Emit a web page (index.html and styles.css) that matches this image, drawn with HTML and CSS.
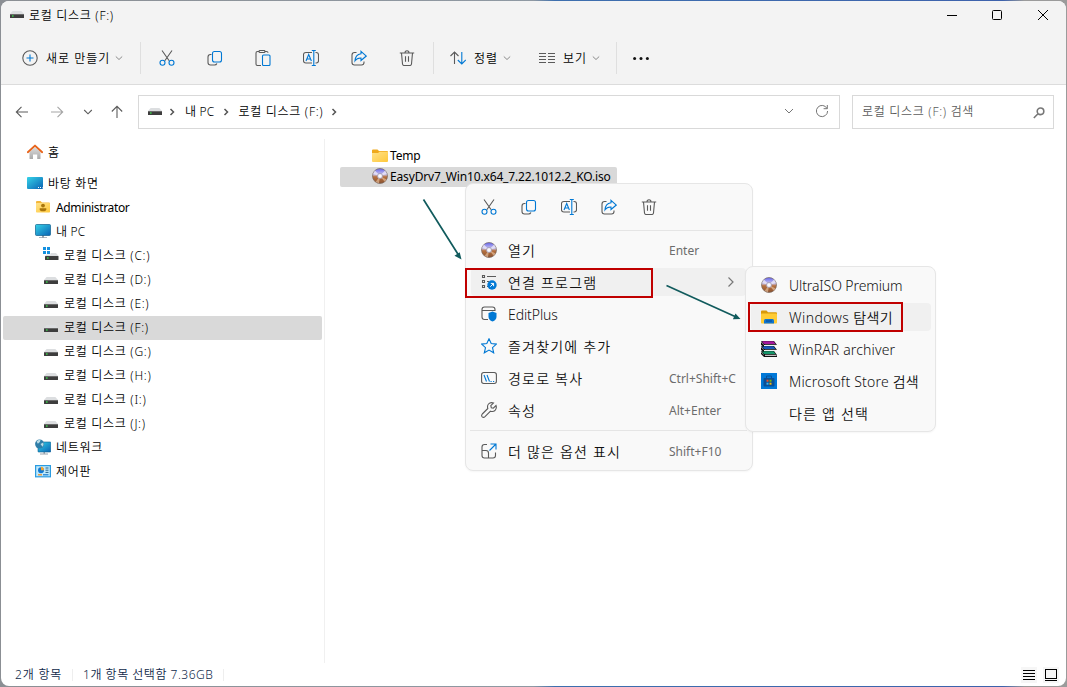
FILE: index.html
```html
<!DOCTYPE html>
<html lang="ko">
<head>
  <meta charset="UTF-8" />
  <meta name="viewport" content="width=device-width, initial-scale=1.0"/>
  <title>로컬 디스크 (F:)</title>
  <link rel="stylesheet" href="styles.css">
</head>
<body>

<!-- Shared icons -->
<svg class="defs" width="0" height="0">
  <defs>
    <linearGradient id="blueScreen" x1="0" y1="0" x2="1" y2="1"><stop offset="0" stop-color="#35d3e8"/><stop offset="1" stop-color="#0a62b4"/></linearGradient>
    <linearGradient id="folderFill" x1="0" y1="0" x2="1" y2="1"><stop offset="0" stop-color="#ffe28a"/><stop offset="1" stop-color="#ffc83a"/></linearGradient>
    <linearGradient id="discFill" x1="0" y1="0" x2="0" y2="1"><stop offset="0" stop-color="#6464ee"/><stop offset=".4" stop-color="#c9c4ea"/><stop offset=".55" stop-color="#b8723f"/><stop offset="1" stop-color="#8a5230"/></linearGradient>
    <linearGradient id="wallFill" x1="0" y1="0" x2="0" y2="1"><stop offset="0" stop-color="#ddd"/><stop offset="1" stop-color="#a9a9a9"/></linearGradient>
  </defs>
  <symbol id="drive" viewBox="0 0 16 16">
    <path d="M3.6 6h8.8l2.6 3H1z" fill="#dcdee0"/>
    <rect x="1" y="9" width="14" height="4" rx=".5" fill="#3d3d3d"/>
    <rect x="1" y="9" width="14" height="1" fill="#6a6a6a"/>
    <rect x="3" y="10.4" width="1.6" height="1.2" fill="#3bea4d"/>
  </symbol>
  <symbol id="system-drive" viewBox="0 0 16 16">
    <path d="M5 6h8l2.6 3H2z" fill="#dcdee0"/>
    <rect x="2" y="9" width="13.5" height="4" rx=".5" fill="#3d3d3d"/>
    <rect x="4" y="10.4" width="1.6" height="1.2" fill="#3bea4d"/>
    <path d="M0 0h7.500v7.500H0z" fill="#fff"/>
    <path d="M0 0h3v3H0zM4 0h3v3H4zM0 4h3v3H0zM4 4h3v3H4z" fill="#1590e0"/>
  </symbol>
  <symbol id="home" viewBox="0 0 16 16">
    <path d="M2.500 8L8 3l5.500 5v6.500q0 .5-.5.5h-2.800v-4.500H6V15H3q-.5 0-.5-.5z" fill="url(#wallFill)"/>
    <path d="M.8 8.200L8 1.600l7.200 6.600" fill="none" stroke="#e8651c" stroke-width="1.900" stroke-linecap="round" stroke-linejoin="round"/>
  </symbol>
  <symbol id="desktop" viewBox="0 0 16 16">
    <rect x="0" y="2" width="16" height="12" rx="1" fill="url(#blueScreen)"/>
    <path d="M11 12.500h1M13 12.500h1M15 12.500h.5" stroke="#fff"/>
  </symbol>
  <symbol id="user-folder" viewBox="0 0 16 16">
    <path d="M1 3q0-1 1-1h3.500l1.500 1.500h7q1 0 1 1V13H1z" fill="#f4b73b"/>
    <rect x="1" y="4" width="14" height="9.500" rx=".8" fill="url(#folderFill)"/>
    <circle cx="8" cy="6.600" r="1.900" fill="#a9750c"/>
    <path d="M4.700 9.200h6.600v1q0 2-3.300 2t-3.300-2z" fill="#a9750c"/>
  </symbol>
  <symbol id="pc" viewBox="0 0 16 16">
    <path d="M7 12h2v2.200h3V15H4v-.8h3z" fill="#9aa4ae"/>
    <rect x=".5" y="1.500" width="15" height="11" rx="1" fill="url(#blueScreen)" stroke="#0f5f8e" stroke-width=".7"/>
  </symbol>
  <symbol id="network" viewBox="0 0 16 16">
    <path d="M8.500 12h1.500v2.600h3V15.500H5v-.9h3.500z" fill="#9aa4ae"/>
    <rect x="3" y="3" width="12.800" height="10" rx=".6" fill="url(#blueScreen)" stroke="#0f5f8e" stroke-width=".6"/>
    <circle cx="4.600" cy="5" r="4.500" fill="#2f7da8"/>
    <path d="M1.500 2.600q2-2.300 4-1.700l-.6 2.200-2 1.600zM5.500 5l2.800-1.500q.8 2-.8 4.300z" fill="#b9dbe6"/>
  </symbol>
  <symbol id="control-panel" viewBox="0 0 16 16">
    <rect x=".6" y="2.600" width="14.800" height="11.200" fill="#bfe9fb" stroke="#2b9be0" stroke-width="1.200"/>
    <circle cx="6" cy="7.200" r="3" fill="#1479d1"/>
    <path d="M6 7.200V3.800a3.400 3.400 0 0 1 3 3.400z" fill="#f7a32b"/>
    <path d="M10.500 5h3M10.500 7.200h3M10.500 9.400h3" stroke="#23638f"/>
    <path d="M3 11.800h4" stroke="#f08a1a" stroke-width="1.200"/>
    <path d="M8 11.800h5.500" stroke="#1479d1" stroke-width="1.200"/>
  </symbol>
  <symbol id="folder" viewBox="0 0 16 16">
    <path d="M0 2.500Q0 1.500 1 1.500h4.500L7 3h8q1 0 1 1v6H0z" fill="#efa91c"/>
    <path d="M0 5h6l1.500-1.200H16V13q0 1-1 1H1q-1 0-1-1z" fill="url(#folderFill)"/>
  </symbol>
  <symbol id="disc" viewBox="0 0 16 16">
    <circle cx="8" cy="8" r="7.500" fill="url(#discFill)" stroke="#75655f" stroke-width=".7"/>
    <path d="M8 8L1 5.500 3 2.500zM8 8l7-2.500-2-3z" fill="#f3eff8" opacity=".7"/>
    <path d="M8 8L3.500 14 7 15.300zM8 8l6.500 3.500-1.800 2.200z" fill="#efc9a8" opacity=".6"/>
    <circle cx="8" cy="8" r="2.600" fill="#eceaf2" stroke="#8e86a0" stroke-width=".6"/>
    <circle cx="8" cy="8" r="1.100" fill="#fff"/>
  </symbol>
  <symbol id="cut" viewBox="0 0 16 16">
    <path d="M3 .5l7.200 10.300M13 .5L5.800 10.800" class="ink"/>
    <circle cx="3.500" cy="12.700" r="2.500" class="accent"/>
    <circle cx="12.500" cy="12.700" r="2.500" class="accent"/>
  </symbol>
  <symbol id="copy" viewBox="0 0 16 16">
    <path d="M4.500 4.500H3.500q-2.500 0-2.500 2.500v5.500q0 2.500 2.500 2.500h4q1.800 0 2.400-1.500" class="ink"/>
    <rect x="5.500" y="1.500" width="9" height="10.500" rx="2" class="accent"/>
  </symbol>
  <symbol id="paste" viewBox="0 0 16 16">
    <path d="M6 15.500H2.500q-1.500 0-1.500-1.500V3q0-1.500 1.500-1.500h1.500M10 1.500h1.500q1.500 0 1.500 1.300" class="ink"/>
    <rect x="4" y=".5" width="6" height="2" rx="1" class="ink"/>
    <rect x="7.500" y="5" width="7.500" height="10.500" rx="1" class="accent"/>
  </symbol>
  <symbol id="rename" viewBox="0 0 16 16">
    <path d="M9 2.500H2.800Q.5 2.500.5 4.800v5.900Q.5 13 2.800 13H9M12.500 2.500h.7q2.300 0 2.300 2.300v5.900q0 2.300-2.300 2.300h-.7" class="ink"/>
    <path d="M3 11l2.700-6.500L8.400 11M4 9h3.500M10.800.5v15M8.800.5h4M8.800 15.500h4" class="accent"/>
  </symbol>
  <symbol id="share" viewBox="0 0 16 16">
    <path d="M5.500 2.500H3.500Q1 2.500 1 5v7.500Q1 15 3.500 15h7q2.500 0 2.500-2.500v-1" class="ink"/>
    <path d="M10 1.300L15.300 6 10 10.500V8Q6 7.800 4 10.800 4.400 4.500 10 3.800z" class="accent"/>
  </symbol>
  <symbol id="trash" viewBox="0 0 16 16">
    <path d="M.8 3h14.400M2.500 3l1 11q.2 1.500 1.600 1.500h5.800q1.400 0 1.600-1.500l1-11M6 3q0-2.300 2-2.300T10 3M6.500 6.300v5.500M9.500 6.300v5.500" class="ink"/>
  </symbol>
  <symbol id="chevron-down" viewBox="0 0 8 8"><path d="M.8 2.500L4 5.500l3.200-3"/></symbol>
  <symbol id="chevron-right" viewBox="0 0 8 8"><path d="M2.500 1L5.500 4l-3 3"/></symbol>
</svg>

<div class="window">

  <div class="title-bar">
    <svg class="title-icon" width="16" height="16"><use href="#drive"/></svg>
    <span class="title-text">로컬 디스크 (F:)</span>
    <svg class="caption" width="10" height="10" viewBox="0 0 10 10"><path d="M0 5.500h10"/></svg>
    <svg class="caption maximize" width="10" height="10" viewBox="0 0 10 10"><rect x=".5" y=".5" width="9" height="9" rx="1"/></svg>
    <svg class="caption" width="10" height="10" viewBox="0 0 10 10"><path d="M0 0l10 10M10 0L0 10"/></svg>
  </div>

  <div class="toolbar">
    <button class="tool-button new-button">
      <svg width="16" height="16" viewBox="0 0 16 16"><circle cx="8" cy="8" r="7.200" class="ink"/><path d="M8 4.500v7M4.500 8h7" class="accent"/></svg>
      <span>새로 만들기</span>
      <svg class="chevron" width="8" height="8"><use href="#chevron-down"/></svg>
    </button>
    <div class="icon-group">
      <svg width="16" height="16"><use href="#cut"/></svg>
      <svg width="16" height="16"><use href="#copy"/></svg>
      <svg width="16" height="16"><use href="#paste"/></svg>
      <svg width="16" height="16"><use href="#rename"/></svg>
      <svg width="16" height="16"><use href="#share"/></svg>
      <svg width="16" height="16"><use href="#trash"/></svg>
    </div>
    <div class="view-group">
      <button class="tool-button sort-button">
        <svg width="16" height="16" viewBox="0 0 16 16"><path d="M.5 6L4.500 2l4 4M4.500 2v12" class="ink"/><path d="M7.800 10l4 4 4-4M11.800 2v12" class="accent"/></svg>
        <span>정렬</span>
        <svg class="chevron" width="8" height="8"><use href="#chevron-down"/></svg>
      </button>
      <button class="tool-button look-button">
        <svg width="16" height="16" viewBox="0 0 16 16"><path d="M0 3.500h7M9 3.500h7M0 6.500h7M9 6.500h7M0 9.500h7M9 9.500h7M0 12.500h7M9 12.500h7" class="ink"/></svg>
        <span>보기</span>
        <svg class="chevron" width="8" height="8"><use href="#chevron-down"/></svg>
      </button>
    </div>
    <svg class="more" width="16" height="16" viewBox="0 0 16 16"><circle cx="1.600" cy="8.500" r="1.500"/><circle cx="8" cy="8.500" r="1.500"/><circle cx="14.400" cy="8.500" r="1.500"/></svg>
  </div>

  <div class="nav-bar">
    <div class="nav-arrows">
      <svg width="14" height="14" viewBox="0 0 14 14"><path d="M13 7H1.500M6.500 1.800L1.300 7l5.200 5.200"/></svg>
      <svg class="off" width="14" height="14" viewBox="0 0 14 14"><path d="M1 7h11.500M7.500 1.800L12.700 7l-5.200 5.200"/></svg>
      <svg width="10" height="14" viewBox="0 0 10 14"><path d="M1.200 5l3.800 3.800L8.800 5"/></svg>
      <svg width="14" height="14" viewBox="0 0 14 14"><path d="M7 13V1.500M1.800 6.500L7 1.300l5.200 5.200"/></svg>
    </div>
    <div class="address">
      <svg class="address-icon" width="16" height="16"><use href="#drive"/></svg>
      <svg class="crumb-arrow" width="8" height="8"><use href="#chevron-right"/></svg>
      <span class="mixed">내 PC</span>
      <svg class="crumb-arrow" width="8" height="8"><use href="#chevron-right"/></svg>
      <span>로컬 디스크 (F:)</span>
      <svg class="crumb-arrow" width="8" height="8"><use href="#chevron-right"/></svg>
      <svg class="history" width="10" height="10" viewBox="0 0 10 10"><path d="M1 3l4 4 4-4"/></svg>
      <svg class="refresh" width="14" height="14" viewBox="0 0 14 14"><path d="M12 4.500A5.600 5.600 0 1 0 12.600 7M12.300 1v3.700H8.600"/></svg>
    </div>
    <div class="search">
      <span>로컬 디스크 (F:) 검색</span>
      <svg width="12" height="12" viewBox="0 0 12 12"><circle cx="7.500" cy="4.300" r="3.300"/><path d="M5 6.800L.8 11"/></svg>
    </div>
  </div>

  <div class="content">
    <div class="tree">
      <div class="node home"><svg width="16" height="16"><use href="#home"/></svg><span>홈</span></div>
      <div class="node"><svg width="16" height="16"><use href="#desktop"/></svg><span>바탕 화면</span></div>
      <div class="node level-1"><svg width="16" height="16"><use href="#user-folder"/></svg><span class="latin">Administrator</span></div>
      <div class="node level-1"><svg width="16" height="16"><use href="#pc"/></svg><span class="mixed">내 PC</span></div>
      <div class="node level-2"><svg width="16" height="16"><use href="#system-drive"/></svg><span>로컬 디스크 (C:)</span></div>
      <div class="node level-2"><svg width="16" height="16"><use href="#drive"/></svg><span>로컬 디스크 (D:)</span></div>
      <div class="node level-2"><svg width="16" height="16"><use href="#drive"/></svg><span>로컬 디스크 (E:)</span></div>
      <div class="node level-2 selected"><svg width="16" height="16"><use href="#drive"/></svg><span>로컬 디스크 (F:)</span></div>
      <div class="node level-2"><svg width="16" height="16"><use href="#drive"/></svg><span>로컬 디스크 (G:)</span></div>
      <div class="node level-2"><svg width="16" height="16"><use href="#drive"/></svg><span>로컬 디스크 (H:)</span></div>
      <div class="node level-2"><svg width="16" height="16"><use href="#drive"/></svg><span>로컬 디스크 (I:)</span></div>
      <div class="node level-2"><svg width="16" height="16"><use href="#drive"/></svg><span>로컬 디스크 (J:)</span></div>
      <div class="node level-1"><svg width="16" height="16"><use href="#network"/></svg><span>네트워크</span></div>
      <div class="node level-1"><svg width="16" height="16"><use href="#control-panel"/></svg><span>제어판</span></div>
    </div>
    <div class="files">
      <div class="file"><svg width="16" height="16"><use href="#folder"/></svg><span>Temp</span></div>
      <div class="file selected"><svg width="16" height="16"><use href="#disc"/></svg><span>EasyDrv7_Win10.x64_7.22.1012.2_KO.iso</span></div>
    </div>
  </div>

  <div class="status-bar">
    <span class="count">2개 항목</span>
    <span class="picked">1개 항목 선택함 7.36GB</span>
    <div class="layout-buttons">
      <svg width="16" height="16" viewBox="0 0 16 16"><path d="M2 3.500h12M2 6.500h12M2 9.500h12M2 12.500h12"/></svg>
      <svg width="16" height="16" viewBox="0 0 16 16"><rect x="2.500" y="2.500" width="11" height="9"/><path d="M2 13.500h12"/></svg>
    </div>
  </div>
</div>

<!-- Context menu -->
<div class="menu context-menu">
  <div class="menu-icons">
    <svg width="16" height="16"><use href="#cut"/></svg>
    <svg width="16" height="16"><use href="#copy"/></svg>
    <svg width="16" height="16"><use href="#rename"/></svg>
    <svg width="16" height="16"><use href="#share"/></svg>
    <svg width="16" height="16"><use href="#trash"/></svg>
  </div>
  <div class="menu-item">
    <svg width="16" height="16"><use href="#disc"/></svg>
    <span class="label">열기</span><span class="keys">Enter</span>
  </div>
  <div class="menu-item hover">
    <svg width="16" height="16" viewBox="0 0 16 16"><path d="M1.500 1.500h2v2h-2zM1.500 6.500h2v2h-2zM1.500 11.500h2v2h-2zM6 2.500h9M6 7.500h2M6 12.500h1" class="ink"/><circle cx="11" cy="11" r="4.700" fill="#0078d4"/><path d="M9.300 12.700l3.200-3.200M9.800 9.400h2.800v2.800" fill="none" stroke="#fff"/></svg>
    <span class="label">연결 프로그램</span>
    <svg class="submenu-arrow" width="8" height="12" viewBox="0 0 8 12"><path d="M1.500 1.500L6 6l-4.500 4.500"/></svg>
  </div>
  <div class="menu-item">
    <svg width="16" height="16" viewBox="0 0 16 16"><path d="M7 13.500H3.500Q1 13.500 1 11V3.500Q1 1 3.500 1h8Q14 1 14 3.500V5M1 4.500h13" class="ink"/><path d="M11.500 5.500l4 1.500v3.500q0 3.500-4 5-4-1.500-4-5V7z" fill="#0078d4"/></svg>
    <span class="label latin-label">EditPlus</span>
  </div>
  <div class="menu-item">
    <svg width="16" height="16" viewBox="0 0 16 16"><path d="M8 .8l2.200 4.800 5.200.5-3.900 3.500 1.200 5.200L8 12.100l-4.700 2.700 1.200-5.200L.6 6.100l5.200-.5z" class="accent"/></svg>
    <span class="label">즐겨찾기에 추가</span>
  </div>
  <div class="menu-item">
    <svg width="16" height="16" viewBox="0 0 16 16"><rect x=".6" y="2.500" width="14.800" height="11" rx="2.200" class="ink"/><path d="M3 5l2.500 6.500M6 5l2.500 6.500M9.500 11.500h1.200M12 11.500h1.200" class="accent"/></svg>
    <span class="label">경로로 복사</span><span class="keys">Ctrl+Shift+C</span>
  </div>
  <div class="menu-item">
    <svg width="16" height="16" viewBox="0 0 16 16"><path d="M12.500 1Q9.500-.2 7.500 2 6 3.800 6.800 6.500L1.300 12Q0 13.500 1.200 14.800 2.500 16 4 14.700L9.500 9.200Q12.300 10 14 8.500 16 6.300 15 3.500L12.300 6.200 10.300 5.700 9.800 3.700z" class="ink"/></svg>
    <span class="label">속성</span><span class="keys">Alt+Enter</span>
  </div>
  <div class="menu-item last">
    <svg width="16" height="16" viewBox="0 0 16 16"><path d="M6 1.500H3.500Q1 1.500 1 4v8.500Q1 15 3.500 15H12q2.500 0 2.500-2.500V9.500M1 7.500h4Q7.500 7.500 7.500 10v5" class="ink"/><path d="M8.500 7.500l6-6M9.500 1h5.500v5.500" class="accent"/></svg>
    <span class="label">더 많은 옵션 표시</span><span class="keys">Shift+F10</span>
  </div>
</div>

<!-- Open with submenu -->
<div class="menu submenu">
  <div class="menu-item">
    <svg width="16" height="16"><use href="#disc"/></svg>
    <span class="label latin-label">UltraISO Premium</span>
  </div>
  <div class="menu-item hover">
    <svg width="16" height="16" viewBox="0 0 16 16"><path d="M0 2.500Q0 1.500 1 1.500h4.500L7 3.300h8q1 0 1 1V8H0z" fill="#d99a0a"/><rect x="0" y="4.500" width="16" height="10" rx=".8" fill="#ffcc35"/><path d="M3 14.500v-3Q3 10 4.500 10h7q1.500 0 1.500 1.500v3z" fill="#0f74cf"/><path d="M5 12h6" stroke="#064a92"/></svg>
    <span class="label mixed">Windows 탐색기</span>
  </div>
  <div class="menu-item">
    <svg width="16" height="16" viewBox="0 0 16 16"><path d="M0 0h13l3 4H3zM0 5h13l3 4H3zM0 10h13l3 4H3z" fill="#111"/><path d="M1 .3h11.500l2 2.700H3z" fill="#a5189d"/><path d="M1 5.300h11.500l2 2.700H3z" fill="#1859b8"/><path d="M1 10.300h11.500l2 2.700H3z" fill="#17966b"/><path d="M0 1l3 3v2L0 4zM0 6l3 3v2L0 9zM0 11l3 3v2l-3-3zM3 14h13v2H3z" fill="#111"/><path d="M4 4.300h11.500M4 9.300h11.500M4 14.300h11.500" stroke="#eee"/></svg>
    <span class="label winrar">WinRAR archiver</span>
  </div>
  <div class="menu-item">
    <svg width="16" height="16" viewBox="0 0 16 16"><rect width="16" height="16" fill="#0078d7"/><path d="M5.500 5V3h5v2" fill="none" stroke="#0a4f96"/><rect x="2.500" y="5" width="11" height="8.500" rx="1" fill="#0a4f96"/><path d="M5.500 6.700h2v2h-2z" fill="#f25022"/><path d="M8.500 6.700h2v2h-2z" fill="#7fba00"/><path d="M5.500 9.700h2v2h-2z" fill="#38b6f1"/><path d="M8.500 9.700h2v2h-2z" fill="#ffb900"/></svg>
    <span class="label store">Microsoft Store 검색</span>
  </div>
  <div class="menu-item">
    <svg width="16" height="16"></svg>
    <span class="label">다른 앱 선택</span>
  </div>
</div>

<!-- Step markers -->
<div class="mark mark-open-with"></div>
<div class="mark mark-explorer"></div>
<svg class="arrows" width="1067" height="687" viewBox="0 0 1067 687">
  <path d="M423.500 199.500L458.500 255M666.500 285.500L735 316.500"/>
  <path class="head" d="M461.500 259.500l-7-3.800 5.200-3.500zM740.500 319l-7.600.3 2.600-5.900z"/>
</svg>

</body>
</html>
```
FILE: styles.css
```css
* {
  box-sizing: border-box;
}

body {
  margin: 0;
  width: 1067px;
  height: 687px;
  padding: 1px;
  position: relative;
  overflow: hidden;
  background: linear-gradient(90deg, #8b8f94 0%, #8f99a3 50%, #3d6fae 52%, #3d62ac 94%, #9b9b9b 96%);
  font-family: "Noto Sans", "Noto Sans CJK KR", sans-serif;
  font-size: 12px;
  font-weight: 350;
  letter-spacing: 0.7px;
  color: #000;
}

svg {
  display: block;
  flex: none;
}

.defs {
  position: absolute;
}

.ink, .accent {
  fill: none;
  stroke: #5a5a5a;
  stroke-width: 1.1;
}

.accent {
  stroke: #0078d4;
}

/* Window frame */
.window {
  display: flex;
  flex-direction: column;
  width: 1065px;
  height: 685px;
  background: #fff;
  border-radius: 8px;
  overflow: hidden;
}

.title-bar {
  display: flex;
  align-items: center;
  height: 28px;
  padding: 0 18px 0 8px;
  background: #f3f3f3;
}

.title-icon {
  margin-top: -4px;
}

.title-text {
  margin: 0 auto 0 4px;
}

.caption {
  margin-left: 36px;
  fill: none;
  stroke: #000;
}

.maximize {
  margin-left: 35px;
}

/* Command bar */
.toolbar {
  display: flex;
  align-items: center;
  height: 56px;
  padding: 3px 0 0 21px;
  background: #f3f3f3;
  border-bottom: 1px solid #dcdcdc;
}

.tool-button {
  display: flex;
  align-items: center;
  padding: 0;
  border: 0;
  background: none;
  font: inherit;
  letter-spacing: 1px;
  color: #000;
}

.new-button {
  width: 118px;
}

.new-button span {
  margin: 0 5px 0 8px;
}

.chevron {
  fill: none;
  stroke: #8a8a8a;
}

.icon-group {
  display: flex;
  align-items: center;
  gap: 32px;
  height: 32px;
  padding: 0 18px;
  border-left: 1px solid #dfdfdf;
  border-right: 1px solid #dfdfdf;
}

.view-group {
  display: flex;
  align-items: center;
  width: 183px;
  height: 32px;
  padding-left: 16px;
  border-right: 1px solid #dfdfdf;
}

.tool-button span {
  white-space: nowrap;
}

.sort-button span,
.look-button span {
  margin: 0 5px 0 8px;
}

.sort-button {
  width: 89px;
}

.more {
  margin-left: 16px;
  fill: #111;
}

/* Address row */
.nav-bar {
  display: flex;
  height: 54px;
  padding: 10px 12px 10px 14px;
}

.nav-arrows {
  display: flex;
  align-items: center;
  gap: 19px;
  width: 123px;
  fill: none;
  stroke: #5c5c5c;
  stroke-width: 1.1;
}

.nav-arrows .off {
  margin-left: 2px;
  stroke: #a5a5a5;
}

.nav-arrows svg:nth-child(4) {
  margin-left: -2px;
}

.address,
.search {
  display: flex;
  align-items: center;
  height: 34px;
  padding-bottom: 2px;
  border: 1px solid #d9d9d9;
}

.address {
  width: 702px;
  padding-left: 8px;
  padding-right: 10px;
}

.address-icon {
  margin-top: -2px;
}

.crumb-arrow {
  margin: 2px 9px 0 7px;
  fill: none;
  stroke: #555;
  stroke-width: 1.5;
}

.address-icon + .crumb-arrow {
  margin-left: 5px;
}

.history,
.refresh {
  fill: none;
  stroke: #767676;
}

.history {
  margin-left: auto;
  margin-right: 21px;
}

.search {
  width: 202px;
  margin-left: 12px;
  padding-left: 9px;
  padding-right: 8px;
  justify-content: space-between;
  color: #5c5c5c;
}

.search svg {
  margin-top: 3px;
  fill: none;
  stroke: #777;
  stroke-width: 1.6;
}

/* Main area */
.content {
  display: flex;
  flex: 1;
}

.tree {
  width: 324px;
  padding: 0 2px;
  border-right: 1px solid #f0f0f0;
}

.node {
  display: flex;
  align-items: center;
  gap: 5px;
  height: 24px;
  padding: 0 0 2px 24px;
  border-radius: 2px;
}

.node.home {
  margin: 2px 0 7px;
}

.node.level-1 {
  padding-left: 32px;
}

.node.level-2 {
  padding-left: 40px;
}

.latin {
  font-weight: 400;
  letter-spacing: -0.35px;
}

.mixed {
  letter-spacing: 0.2px;
}

.selected {
  background: #d9d9d9;
}

.files {
  padding: 6px 0 0 15px;
  font-weight: 400;
  letter-spacing: -0.16px;
}

.file {
  display: flex;
  align-items: center;
  gap: 2px;
  height: 21px;
  width: 277px;
  padding-left: 32px;
}

.file.selected {
  height: 20px;
  margin-top: 1px;
  padding-bottom: 2px;
  border-radius: 2px;
}

.status-bar {
  display: flex;
  align-items: center;
  height: 23px;
  padding: 0 7px 0 14px;
  letter-spacing: 0.5px;
  color: #10294a;
}

.count,
.picked {
  padding-right: 10px;
  border-right: 1px solid #eee;
  line-height: 12px;
}

.count {
  letter-spacing: 0.8px;
}

.picked {
  padding-left: 10px;
}

.layout-buttons {
  display: flex;
  gap: 6px;
  margin-left: auto;
  fill: none;
  stroke: #000;
}

.layout-buttons svg {
  background: #f6f6f6;
}

/* Menus */
.menu {
  position: absolute;
  background: #f9f9f9;
  border: 1px solid #e6e6e6;
  border-radius: 8px;
  box-shadow: 0 1px 2px rgba(0, 0, 0, 0.04);
}

.context-menu {
  left: 465px;
  top: 183px;
  width: 288px;
  height: 288px;
}

.submenu {
  left: 745px;
  top: 266px;
  width: 191px;
  height: 166px;
  padding-top: 4px;
}

.menu-icons {
  display: flex;
  align-items: center;
  gap: 24px;
  height: 47px;
  margin-bottom: 5px;
  padding-left: 15px;
  border-bottom: 1px solid #e5e5e5;
}

.menu-item {
  display: flex;
  align-items: center;
  height: 28px;
  margin: 0 6px 4px 5px;
  padding-left: 10px;
  border-radius: 4px;
  font-size: 14px;
  color: #111;
}

.menu-item.hover {
  background: #f0f0f0;
}

.menu-item.last {
  position: relative;
  margin-top: 13px;
}

.menu-item.last::before {
  content: "";
  position: absolute;
  top: -7px;
  left: -1px;
  right: -1px;
  height: 1px;
  background: #e5e5e5;
}

.label {
  width: 161px;
  margin-left: 11px;
  letter-spacing: 1.2px;
  white-space: nowrap;
}

.label.mixed {
  letter-spacing: 0.4px;
}

.latin-label {
  letter-spacing: -0.1px;
}

.winrar {
  letter-spacing: 0.15px;
}

.store {
  letter-spacing: 0.2px;
}

.keys {
  font-size: 12px;
  font-weight: 400;
  letter-spacing: 0;
  color: #6c6c6c;
  white-space: nowrap;
}

.submenu-arrow {
  margin-left: 58px;
  fill: none;
  stroke: #777;
  stroke-width: 1.2;
}

.submenu .menu-item {
  margin: 0 4px 4px 5px;
}

.submenu .label {
  margin-left: 12px;
}

/* Red frames and arrows */
.mark {
  position: absolute;
  height: 30px;
  border: 2px solid #c00000;
}

.mark-open-with {
  left: 465px;
  top: 268px;
  width: 188px;
}

.mark-explorer {
  left: 748px;
  top: 302px;
  width: 155px;
}

.arrows {
  position: absolute;
  left: 0;
  top: 0;
  fill: none;
  stroke: #115b5d;
  stroke-width: 1.7;
}

.head {
  fill: #115b5d;
  stroke: none;
}
```
